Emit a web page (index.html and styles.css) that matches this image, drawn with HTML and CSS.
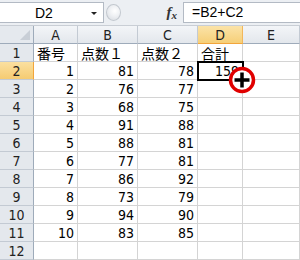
FILE: index.html
```html
<!DOCTYPE html>
<html lang="ja">
<head>
  <meta charset="UTF-8" />
  <title>合計</title>
  <link rel="stylesheet" href="styles.css">
</head>
<body>

  <!-- Formula bar -->
  <div class="formula-bar">
    <div class="name-box">
      <span class="name">D2</span>
      <span class="drop"></span>
    </div>
    <div class="knob"></div>
    <div class="fx"><i>f</i><i class="x">x</i></div>
    <div class="formula">=B2+C2</div>
  </div>

  <!-- Sheet -->
  <div class="sheet">
    <div class="corner"></div>
    <div class="col">A</div>
    <div class="col">B</div>
    <div class="col">C</div>
    <div class="col active">D</div>
    <div class="col">E</div>

    <div class="row">1</div>
    <div class="cell text">番号</div>
    <div class="cell text">点数１</div>
    <div class="cell text">点数２</div>
    <div class="cell text">合計</div>
    <div class="cell"></div>

    <div class="row active">2</div>
    <div class="cell">1</div>
    <div class="cell">81</div>
    <div class="cell">78</div>
    <div class="cell selected">159</div>
    <div class="cell"></div>

    <div class="row">3</div>
    <div class="cell">2</div>
    <div class="cell">76</div>
    <div class="cell">77</div>
    <div class="cell"></div>
    <div class="cell"></div>

    <div class="row">4</div>
    <div class="cell">3</div>
    <div class="cell">68</div>
    <div class="cell">75</div>
    <div class="cell"></div>
    <div class="cell"></div>

    <div class="row">5</div>
    <div class="cell">4</div>
    <div class="cell">91</div>
    <div class="cell">88</div>
    <div class="cell"></div>
    <div class="cell"></div>

    <div class="row">6</div>
    <div class="cell">5</div>
    <div class="cell">88</div>
    <div class="cell">81</div>
    <div class="cell"></div>
    <div class="cell"></div>

    <div class="row">7</div>
    <div class="cell">6</div>
    <div class="cell">77</div>
    <div class="cell">81</div>
    <div class="cell"></div>
    <div class="cell"></div>

    <div class="row">8</div>
    <div class="cell">7</div>
    <div class="cell">86</div>
    <div class="cell">92</div>
    <div class="cell"></div>
    <div class="cell"></div>

    <div class="row">9</div>
    <div class="cell">8</div>
    <div class="cell">73</div>
    <div class="cell">79</div>
    <div class="cell"></div>
    <div class="cell"></div>

    <div class="row">10</div>
    <div class="cell">9</div>
    <div class="cell">94</div>
    <div class="cell">90</div>
    <div class="cell"></div>
    <div class="cell"></div>

    <div class="row">11</div>
    <div class="cell">10</div>
    <div class="cell">83</div>
    <div class="cell">85</div>
    <div class="cell"></div>
    <div class="cell"></div>

    <div class="row">12</div>
    <div class="cell"></div>
    <div class="cell"></div>
    <div class="cell"></div>
    <div class="cell"></div>
    <div class="cell"></div>

    <!-- fill handle cursor -->
    <svg class="cursor" width="30" height="30" viewBox="0 0 30 30">
      <circle cx="15" cy="15" r="11.5" fill="#fff" stroke="#e00000" stroke-width="3.5"/>
      <path d="M15 7.5V22.5M7.5 15H22.5" stroke="#000" stroke-width="3.5"/>
    </svg>
  </div>

</body>
</html>
```

FILE: styles.css
```css
html, body {
  margin: 0;
  padding: 0;
  background: #ffffff;
  overflow: hidden;
}

body {
  width: 300px;
  height: 260px;
  font-family: "Noto Sans CJK JP", sans-serif;
  color: #000;
}

/* ---- formula bar ---- */
.formula-bar {
  height: 26px;
  box-sizing: border-box;
  padding-top: 2px;
  background: #eceff3;
  border-bottom: 1px solid #c9ced5;
  display: flex;
  align-items: flex-start;
}

.name-box {
  width: 105px;
  height: 21px;
  box-sizing: border-box;
  margin-left: -1px;
  background: #fff;
  border: 1px solid #b3bac4;
  display: flex;
  align-items: center;
  font-family: "Liberation Sans", sans-serif;
  font-size: 14px;
}

.name {
  padding-left: 35px;
  flex: 1;
}

.drop {
  width: 0;
  height: 0;
  margin-right: 6px;
  margin-top: 2px;
  border-left: 3px solid transparent;
  border-right: 3px solid transparent;
  border-top: 3px solid #222;
}

.knob {
  width: 15px;
  height: 17px;
  margin: 2px 0 0 2px;
  border-radius: 50%;
  box-sizing: border-box;
  border: 1px solid #c3c8cf;
  background: radial-gradient(circle at 60% 40%, #ffffff 0, #eef0f3 45%, #d4d8de 100%);
}

.fx {
  width: 62px;
  height: 21px;
  box-sizing: border-box;
  padding-right: 6px;
  display: flex;
  justify-content: flex-end;
  align-items: center;
  font-family: "Liberation Serif", serif;
  font-weight: bold;
  font-size: 15px;
  color: #333;
}

.fx .x {
  font-size: 11px;
  margin-top: 4px;
}

.formula {
  flex: 1;
  height: 21px;
  box-sizing: border-box;
  background: #fff;
  border: 1px solid #b3bac4;
  border-right: none;
  padding-left: 8px;
  font-family: "Liberation Sans", sans-serif;
  font-size: 14px;
  line-height: 19px;
}

/* ---- sheet ---- */
.sheet {
  position: relative;
  display: grid;
  grid-template-columns: 34px 44px 60px 60px 45px 1fr;
  grid-auto-rows: 18px;
  font-size: 14px;
}

.sheet > div {
  box-sizing: border-box;
  border-right: 1px solid #d4d4d4;
  border-bottom: 1px solid #d4d4d4;
  display: flex;
  align-items: center;
  padding-top: 1px;
  white-space: nowrap;
  overflow: hidden;
}

.corner {
  position: relative;
  background: #e5e9ee;
}

.corner::after {
  content: "";
  position: absolute;
  right: 3px;
  bottom: 3px;
  width: 0;
  height: 0;
  border-left: 10px solid transparent;
  border-bottom: 10px solid #c8ced6;
}

.sheet > .corner {
  border-right-color: #9eabba;
  border-bottom-color: #9eabba;
}

.sheet > .col {
  justify-content: center;
  background: linear-gradient(#f3f5f8, #e3e7ec);
  border-right-color: #c3cad3;
  border-bottom-color: #9eabba;
  font-family: "Liberation Sans Narrow", "DejaVu Sans Condensed", sans-serif;
  color: #222;
}

.sheet > .row {
  justify-content: center;
  background: #e4e8ed;
  border-right-color: #9eabba;
  border-bottom-color: #c3cad3;
  font-family: "Liberation Sans Narrow", "DejaVu Sans Condensed", sans-serif;
  color: #222;
}

.sheet > .col.active {
  background: linear-gradient(#fbe3a8, #f6cf78);
  border-bottom-color: #f2a53b;
  border-right-color: #f2b75b;
}

.sheet > .row.active {
  background: linear-gradient(#fbe0a0, #f5cb72);
  border-right-color: #f2a53b;
}

.cell {
  justify-content: flex-end;
  padding-right: 3px;
  font-family: "Liberation Sans Narrow", "DejaVu Sans Condensed", sans-serif;
}

.sheet > .text {
  justify-content: flex-start;
  padding-left: 3px;
  font-family: "Noto Sans CJK JP", sans-serif;
  font-size: 14px;
}

.sheet > .selected {
  position: relative;
  z-index: 1;
  outline: 2px solid #000;
  outline-offset: -1px;
  overflow: visible;
}

.cursor {
  position: absolute;
  left: 227px;
  top: 39px;
  z-index: 2;
}
```
